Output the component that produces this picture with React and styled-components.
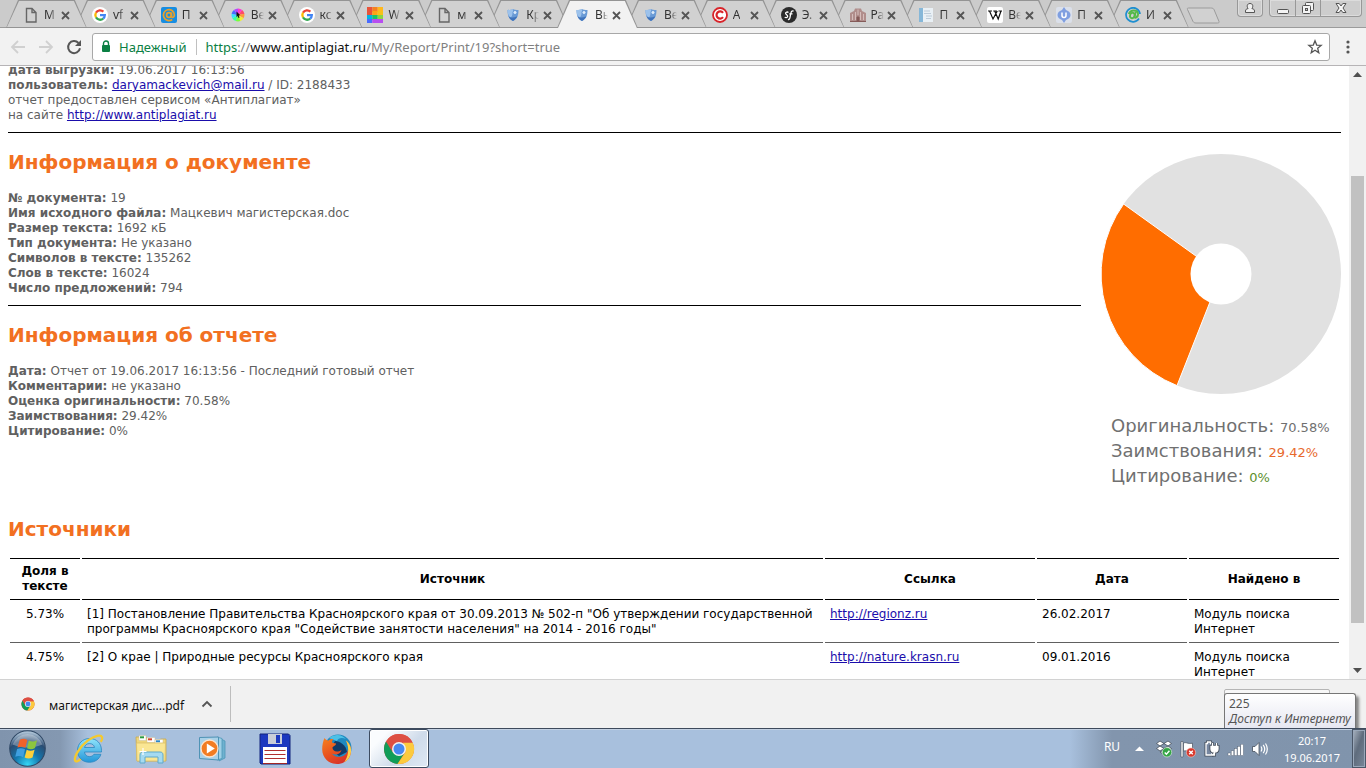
import React from "react";
import styled, { createGlobalStyle } from "styled-components";

const uiFont = `"Noto Sans", "Open Sans", sans-serif`;
const docFont = `Verdana, "DejaVu Sans", sans-serif`;

const GlobalStyle = createGlobalStyle`
  * { box-sizing: border-box; }
  body { margin: 0; background: #fff; }
  button { font: inherit; color: inherit; background: none; border: 0; padding: 0; margin: 0; }
`;

const Screen = styled.div`
  display: flex;
  flex-direction: column;
  height: 100vh;
  overflow: hidden;
  font-family: ${uiFont};
`;

/* ---------- tab strip ---------- */

const TabStrip = styled.header`
  display: flex;
  height: 28px;
  flex: none;
  padding-left: 6px;
  background: #cbcbcb;
  border-bottom: 1px solid #9b9b9b;
`;

const TabList = styled.nav`
  display: flex;
  flex: 1;
  min-width: 0;
`;

const Tab = styled.div`
  position: relative;
  z-index: ${(p) => (p.$active ? 40 : p.$layer)};
  flex: 1 1 0;
  min-width: 0;
  max-width: 240px;
  height: 28px;
  margin-right: -12px;
  padding: 2px 17px 0 17px;
  display: flex;
  align-items: center;
  background: #949494;
  clip-path: polygon(0 100%, 12px 0, calc(100% - 12px) 0, 100% 100%);
  &:last-child { margin-right: 0; }
  &::before {
    content: "";
    position: absolute;
    z-index: -1;
    inset: 1px 1px ${(p) => (p.$active ? "0" : "1px")} 1px;
    background: ${(p) => (p.$active ? "#f2f2f2" : "#d1d1d1")};
    clip-path: polygon(0 100%, 12px 0, calc(100% - 12px) 0, 100% 100%);
  }
`;

const TabTitle = styled.button`
  display: flex;
  align-items: center;
  gap: 5px;
  flex: 1;
  min-width: 0;
  font-size: 12px;
  line-height: 16px;
  color: #333;
  svg { flex: none; }
  span {
    white-space: nowrap;
    text-align: left;
    mask-image: linear-gradient(90deg, #000 6px, transparent 13px);
  }
`;

const IconButton = styled.button`
  display: flex;
  align-items: center;
  justify-content: center;
  flex: none;
  svg { display: block; }
`;

const NewTab = styled.button`
  flex: none;
  width: 34px;
  height: 17px;
  margin: 7px 17px 0 -3px;
  svg { display: block; }
`;

const WindowButtons = styled.div`
  display: flex;
  flex: none;
  height: 17px;
  margin-right: ${(p) => (p.$last ? "4px" : "6px")};
  border: 1px solid #989898;
  border-top: 0;
  border-radius: 0 0 4px 4px;
  background: #cdcdcd;
  box-shadow: inset 0 0 0 1px #dcdcdc;
`;

const WindowButton = styled(IconButton)`
  width: ${(p) => p.$width}px;
  & + & { border-left: 1px solid #989898; }
`;

/* ---------- toolbar ---------- */

const Toolbar = styled.div`
  display: flex;
  align-items: center;
  flex: none;
  height: 38px;
  padding-left: 4px;
  background: #f2f2f2;
  border-bottom: 1px solid #b6b4b6;
`;

const NavButton = styled(IconButton)`
  width: 28px;
  height: 28px;
  color: ${(p) => (p.disabled ? "#d0d0d0" : "#555")};
`;

const MenuButton = styled(IconButton)`
  width: 36px;
  height: 28px;
  color: #555;
`;

const AddressBar = styled.div`
  display: flex;
  align-items: center;
  flex: 1;
  min-width: 0;
  height: 28px;
  margin-left: 4px;
  padding: 0 6px 0 8px;
  border: 1px solid #a8a8a8;
  border-radius: 3px;
  background: #fff;
  font-size: 13px;
  line-height: 20px;
`;

const Secure = styled.button`
  display: flex;
  align-items: center;
  gap: 8px;
  margin-right: 8px;
  padding-right: 10px;
  border-right: 1px solid #c0c0c0;
  color: #0b8043;
  height: 16px;
`;

const Url = styled.div`
  flex: 1;
  color: #808080;
  white-space: nowrap;
  b { font-weight: 400; color: #0b8043; }
  strong { font-weight: 400; color: #111; }
`;

/* ---------- page viewport ---------- */

const Viewport = styled.div`
  display: flex;
  flex: 1;
  min-height: 0;
  overflow: hidden;
`;

const Document = styled.main`
  flex: 1;
  min-width: 0;
  margin-top: -3px;
  padding: 0 8px;
  font-family: ${docFont};
  font-size: 12px;
  line-height: 15px;
  color: #606060;
`;

const Meta = styled.p`
  margin: 0;
`;

const DocLink = styled.a`
  color: #1a0dab;
  text-decoration: underline;
`;

const Rule = styled.hr`
  height: 1px;
  margin: 9px 0 0;
  border: 0;
  background: #000;
`;

const Summary = styled.section`
  display: flex;
  gap: 20px;
  padding-bottom: 12px;
`;

const SummaryText = styled.div`
  flex: 1;
  min-width: 0;
`;

const Heading = styled.h2`
  margin: 17px 0 16px;
  font-size: 20px;
  line-height: 25px;
  font-weight: 700;
  color: #f27021;
`;

const ChartPanel = styled.aside`
  flex: none;
  width: 240px;
  padding-top: 21px;
  svg { display: block; }
`;

const Legend = styled.ul`
  list-style: none;
  margin: 19px 0 0;
  padding: 0 0 0 10px;
  font-size: 18px;
  line-height: 25px;
  color: #707070;
  white-space: nowrap;
`;

const LegendValue = styled.span`
  font-size: 13px;
  line-height: 15px;
  color: ${(p) => p.$color};
`;

const SourceTable = styled.table`
  width: 100%;
  table-layout: fixed;
  border-collapse: separate;
  border-spacing: 2px 2px;
  margin-top: -2px;
  font-size: 12px;
  line-height: 15px;
  color: #000;
`;

const Th = styled.th`
  width: ${(p) => p.$width || "auto"};
  padding: 5px;
  border-top: 1px solid #000;
  border-bottom: 1px solid #000;
`;

const Td = styled.td`
  padding: 5px;
  border-bottom: 1px solid #606060;
  vertical-align: top;
  text-align: ${(p) => (p.$center ? "center" : "left")};
`;

const Scrollbar = styled.div`
  display: flex;
  flex-direction: column;
  align-items: center;
  flex: none;
  width: 17px;
  background: #f1f1f1;
`;

const ScrollButton = styled(IconButton)`
  width: 17px;
  height: 17px;
`;

const ScrollTrack = styled.div`
  display: flex;
  flex-direction: column;
  flex: 1;
  width: 13px;
  &::before { content: ""; flex: 93; }
  &::after { content: ""; flex: 39; }
`;

const ScrollThumb = styled.div`
  flex: 447;
  background: #c1c1c1;
`;

/* ---------- downloads ---------- */

const DownloadBar = styled.footer`
  position: relative;
  display: flex;
  align-items: flex-start;
  justify-content: space-between;
  flex: none;
  height: 49px;
  background: #f1f1f1;
  border-top: 1px solid #d2d2d2;
  font-size: 12px;
  line-height: 18px;
`;

const DownloadItem = styled.div`
  display: flex;
  align-items: center;
  width: 231px;
  height: 36px;
  margin-top: 6px;
  padding: 0 17px 0 21px;
  border-right: 1px solid #bdbdbd;
`;

const FileName = styled.button`
  display: flex;
  align-items: center;
  gap: 14px;
  flex: 1;
  color: #111;
  white-space: nowrap;
  svg { flex: none; }
  span { padding-top: 4px; }
`;

const ShowAll = styled.button`
  width: 106px;
  height: 28px;
  margin: 9px 36px 0 0;
  border: 1px solid #b5b5b5;
  border-radius: 2px;
  background: #f7f7f7;
  color: #444;
`;

const Tooltip = styled.div`
  position: absolute;
  right: 10px;
  bottom: 0;
  height: 35px;
  width: 132px;
  padding: 2px 4px 0;
  border: 1px solid #767676;
  border-bottom: 0;
  border-radius: 3px 3px 0 0;
  background: linear-gradient(#fff, #e6e7f1);
  box-shadow: 3px 3px 3px rgba(0, 0, 0, 0.45);
  font-size: 12px;
  line-height: 15px;
  color: #555;
  white-space: nowrap;
  em { display: block; }
`;

/* ---------- taskbar ---------- */

const Taskbar = styled.footer`
  position: relative;
  display: flex;
  align-items: center;
  flex: none;
  height: 40px;
  border-top: 1px solid #3e4a5c;
  box-shadow: inset 0 1px 0 #c3d1e3;
  background: linear-gradient(90deg, #8094ad 0, #8498b1 60px, transparent 88px),
    linear-gradient(270deg, #8094ac 0, #8295ad 254px, transparent 296px), #a8c0dd;
`;

const StartButton = styled(IconButton)`
  width: 54px;
  margin-right: 5px;
`;

const AppButton = styled(IconButton)`
  width: 60px;
  height: 39px;
  margin-right: 2px;
  ${(p) =>
    p.$active &&
    `border: 1px solid #3c4b60; border-radius: 3px; box-shadow: inset 0 0 0 1px #fff;
     background: linear-gradient(135deg, #fafcfe 20%, #cfdbea 60%, #dfe9f4);`}
`;

const Tray = styled.div`
  display: flex;
  align-items: center;
  margin-left: auto;
  height: 100%;
  color: #fff;
`;

const Language = styled.button`
  width: 28px;
  padding-bottom: 4px;
  font-size: 12px;
`;

const TrayButton = styled(IconButton)`
  width: ${(p) => p.$width || 24}px;
  height: 24px;
`;

const Clock = styled.time`
  width: 80px;
  font-size: 11px;
  line-height: 17px;
  text-align: center;
`;

const ShowDesktop = styled.button`
  width: 14px;
  height: 100%;
  border: 1px solid #4b5768;
  box-shadow: inset 0 0 0 1px #9aa8ba;
  background: linear-gradient(110deg, #a9b3c0, #5f6c7d 45%, #798799);
`;

/* ---------- favicons ---------- */

const Svg = ({ size = 16, box, children, ...rest }) => (
  <svg width={size} height={size} viewBox={`0 0 ${box || size} ${box || size}`} aria-hidden="true" {...rest}>
    {children}
  </svg>
);

const PageIcon = () => (
  <Svg>
    <path d="M3.5 1.5h5.5l4 4v9.5h-9.5z M9 1.5v4h4" fill="none" stroke="#666" strokeWidth="1.4" />
  </Svg>
);

const GoogleIcon = () => (
  <Svg>
    <circle cx="8" cy="8" r="8" fill="#fff" />
    <g fill="none" strokeWidth="2.3">
      <path d="M4 5.6A4.8 4.8 0 0 1 11.4 4.6" stroke="#ea4335" />
      <path d="M4 5.6A4.8 4.8 0 0 0 4 10.4" stroke="#fbbc05" />
      <path d="M4 10.4A4.8 4.8 0 0 0 11.2 11.6" stroke="#34a853" />
      <path d="M8 8.2h4.8A4.8 4.8 0 0 1 11.2 11.6" stroke="#4285f4" />
    </g>
  </Svg>
);

const MailIcon = () => (
  <Svg>
    <rect width="16" height="16" rx="2" fill="#168de2" />
    <g fill="none" stroke="#e8a02c" strokeWidth="1.7">
      <circle cx="8" cy="8" r="2.4" />
      <path d="M10.4 5.5v3.6c0 2 3 1.600 3-1.100A5.500 5.500 0 1 0 11.200 12.500" />
    </g>
  </Svg>
);

const WheelIcon = () => (
  <Svg>
    {["#ff4a6a", "#ff9a3a", "#f0f03a", "#7dff3a", "#3affa2", "#3ae0ff", "#4a6aff", "#b04aff", "#ff3ad0"].map((c, i) => {
      const a = ((i * 40 - 50) * Math.PI) / 180;
      const b = ((i * 40 - 9) * Math.PI) / 180;
      return (
        <path
          key={c}
          fill={c}
          d={`M8 8L${8 + 6.5 * Math.cos(a)} ${8 + 6.5 * Math.sin(a)}A6.5 6.5 0 0 1 ${8 + 6.5 * Math.cos(b)} ${8 + 6.5 * Math.sin(b)}Z`}
        />
      );
    })}
    <path d="M6.500 4.500l3.800 3.700-1.600.2.900 2-1.100.5-.9-2-1.100 1z" fill="#111" />
  </Svg>
);

const GridIcon = () => (
  <Svg>
    {[
      ["#e8533a", "#f58220", "#ffb81c"],
      ["#e8533a", "#fda515", "#f7c117"],
      ["#00b4e4", "#19c569", "#8dd63f"],
    ].map((row, y) => row.map((c, x) => <rect key={`${x}${y}`} x={x * 5.33} y={y * 4} width="5.4" height="5" fill={c} />))}
    <path d="M0 12h5.300v4H0z" fill="#4a6bff" />
    <path d="M5.300 12h10.700v4H5.300z" fill="#b84df0" />
  </Svg>
);

const ShieldIcon = () => (
  <Svg>
    <path d="M2.500 3C5 3 7 2.600 8 2c1 .6 3 1 5.500 1 0 6-1.500 9-5.500 11C4 12 2.500 9 2.500 3z" fill="#6a9bd6" />
    <path d="M2.500 3C5 3 7 2.600 8 2c.3.200 0 6-2 8.500C3.500 10 2.500 6 2.500 3z" fill="#9cc2ec" />
    <circle cx="10" cy="5.500" r="2" fill="#dcebfa" stroke="#5b8fd0" strokeWidth=".8" />
    <path d="M3.500 9c2 2 5 2 8.800.3-.8 2-2.200 3.400-4.300 4.700C5.500 13 4.200 11.300 3.500 9z" fill="#3f73bb" />
  </Svg>
);

const CopyrightIcon = () => (
  <Svg>
    <circle cx="8" cy="8" r="7" fill="#fff" stroke="#d8242a" strokeWidth="1.800" />
    <path d="M11 5.800A3.600 3.600 0 1 0 11 10.200" fill="none" stroke="#d8242a" strokeWidth="2.200" />
  </Svg>
);

const SymfonyIcon = () => (
  <Svg>
    <circle cx="8" cy="8" r="8" fill="#2b2b2b" />
    <path
      d="M7.300 5.600C6.800 4.600 4.400 5 4.600 6.500c.2 1.300 2.400 1.500 2 3.100-.3 1.300-2.200 1.300-2.800.4M12.600 4.300c-1-.9-2.400-.2-2.700 1.600L9 10.500c-.3 1.700-1.200 2.300-2 1.900M8.300 6.900h3.200"
      fill="none"
      stroke="#fff"
      strokeWidth="1.300"
    />
  </Svg>
);

const LibraryIcon = () => (
  <Svg>
    <path d="M0 6l4-2 1-2.500h6L12 4l4 2v9H0z" fill="#b08d8b" />
    <path d="M2.500 13V7M5.500 13V5M8 8V2.500M10.500 13V5M13.500 13V7" stroke="#d9c3c1" strokeWidth=".9" />
    <path d="M0 14.500h16M7 10h2v4H7z" stroke="#855b59" strokeWidth="1" fill="#855b59" />
  </Svg>
);

const DocIcon = () => (
  <Svg>
    <rect x="1" y="1" width="14" height="14" fill="#e9f0f5" />
    <rect x="1" y="1" width="4" height="14" fill="#86b7d8" />
    <path d="M6 4h6M6 6.500h7M8 9h6M8 11.500h5" stroke="#bccbd8" />
  </Svg>
);

const WikiIcon = () => (
  <Svg>
    <rect width="16" height="16" rx="2" fill="#fff" />
    <path d="M1 4h4M6.300 4h3.600M11.500 4H15M2.600 4.200L6 12l4.300-8M7.700 4l3.500 8 2.800-8" fill="none" stroke="#111" strokeWidth="1.200" />
  </Svg>
);

const UnivIcon = () => (
  <Svg>
    <rect width="16" height="16" rx="2" fill="#dbe0ea" />
    <path d="M8 0l2 3c3 1 4.500 2.700 4.500 5s-1.500 4-4.500 5l-2 3-2-3C3 12 1.500 10.300 1.500 8S3 4 6 3z" fill="#7f9fe0" />
    <path d="M6 5.500V8.600a2 2 0 0 0 4 0V5.500" fill="none" stroke="#fff" strokeWidth="1.500" />
  </Svg>
);

const AtIcon = () => (
  <Svg>
    <path d="M14 11.500A7 7 0 1 1 15 7" fill="none" stroke="#1f8fd0" strokeWidth="1.700" />
    <g fill="none" stroke="#54b948" strokeWidth="1.800">
      <ellipse cx="7.300" cy="8.500" rx="2.200" ry="2.700" transform="rotate(20 7.300 8.500)" />
      <path d="M10.700 5l-1.100 5c0 1.800 3.500.5 3.500-2.600C13.100 2.500 6 2 3.700 7" />
    </g>
  </Svg>
);

const ChromeIcon = ({ size = 16 }) => (
  <Svg size={size} box={32}>
    <circle cx="16" cy="16" r="15" fill="#dd4f43" />
    <path d="M3 8.500A15 15 0 0 0 14.500 31L21.500 20 16 16 9.500 19z" fill="#109d58" />
    <path d="M29.600 9.500A15 15 0 0 1 14.500 31l8-12L20 9.500z" fill="#fcca3e" />
    <path d="M3 8.500A15 15 0 0 1 29.600 9.500H16z" fill="#dd4f43" />
    <circle cx="16" cy="16" r="7" fill="#f1f1f1" />
    <circle cx="16" cy="16" r="5.500" fill="#4688f1" />
  </Svg>
);

const CloseIcon = () => (
  <Svg size={9}>
    <path d="M1 1l7 7M8 1l-7 7" stroke="#555" strokeWidth="1.800" />
  </Svg>
);

/* ---------- taskbar icons ---------- */

const StartOrb = () => (
  <Svg size={37} box={36}>
    <defs>
      <radialGradient id="orb" cx=".5" cy=".95" r=".9">
        <stop offset="0" stopColor="#35d6f5" />
        <stop offset=".4" stopColor="#1377ae" />
        <stop offset=".75" stopColor="#2b4c72" />
        <stop offset="1" stopColor="#a9bfd3" />
      </radialGradient>
    </defs>
    <circle cx="18" cy="18" r="17.300" fill="url(#orb)" stroke="#2f4865" />
    <path d="M3.500 14A15.500 15.500 0 0 1 32.500 14C24 18 12 18 3.500 14z" fill="#fff" opacity=".3" />
    <path d="M10.500 9.500c3-1.700 5-1.200 7.300.2L16 17.300c-2.500-1.400-5-1.500-7.800-.2z" fill="#f0622a" />
    <path d="M19.300 10.300c2.700 1.300 5 1.300 8-.3l-2 7.500c-2.500 1.500-5 1.400-7.700.3z" fill="#8cc63e" />
    <path d="M7.900 18.500c2.800-1.300 5.200-1 7.700.3l-1.900 7.600c-2.500-1.400-5-1.400-7.600-.3z" fill="#3f9fe0" />
    <path d="M17.200 19.300c2.700 1.300 5 1.200 7.700-.2l-2 7.600c-2.500 1.400-5 1.400-7.700 0z" fill="#fcd03b" />
  </Svg>
);

const IeIcon = () => (
  <Svg size={32}>
    <defs>
      <linearGradient id="ie" x1="0" y1="0" x2="0" y2="1">
        <stop offset="0" stopColor="#8fe4fb" />
        <stop offset="1" stopColor="#2496d8" />
      </linearGradient>
    </defs>
    <path
      d="M28.500 19H11.500c.3 3 2.200 4.600 5 4.600 2.100 0 3.600-.8 4.400-2.300h7c-1.500 5-6 8-11.500 8C9.500 29.300 4.500 24.500 4.500 17.500S9.800 5.500 16.500 5.500c7.500 0 12 5.200 12 12zM21.500 14.500c-.3-2.300-2.200-3.900-4.900-3.900s-4.600 1.500-5.100 3.900z"
      fill="url(#ie)"
      stroke="#2b86c0"
      strokeWidth=".8"
    />
    <path d="M7.500 26c-2.500 2.600-4.800 3-5.400 1.600C.8 24.500 6 14 15 7.400 22 2.200 28 1.500 29 4.200c.5 1.300-.2 3-1.200 4.700" fill="none" stroke="#f4c92f" strokeWidth="2.300" />
  </Svg>
);

const FolderIcon = () => (
  <Svg size={32}>
    <path d="M1 4h10l2 3h11l2-1h5v22H2z" fill="#efd67a" stroke="#c9a94e" strokeWidth=".8" />
    <path d="M4 2.500h7v5H4zM12 4.500h8v5h-8zM20 6.500h8v5h-8z" fill="#fff" stroke="#c9bf9b" strokeWidth=".5" />
    <path d="M5 3.300h4v2H5z" fill="#2d9b3f" />
    <path d="M13 5.300h4v2h-4z" fill="#d4442d" />
    <path d="M21 7.300h4v2h-4z" fill="#2c87c9" />
    <path d="M1.500 10h29L30 28H2z" fill="#fae693" stroke="#dcc06a" strokeWidth=".8" />
    <path d="M5 30V22c0-2 1-3 3-3h17c2 0 3 1 3 3v8h-5v-6H10v6z" fill="#a5daf0" stroke="#5fa9cc" />
    <path d="M8 15v7M4.500 18.500h7" stroke="#fff" strokeWidth="1.200" />
  </Svg>
);

const PlayerIcon = () => (
  <Svg size={32}>
    <path d="M24 6l4 2v17l-6 3z" fill="#6fb1cf" stroke="#4c97b7" strokeWidth=".8" />
    <path d="M20 4l5 1.500v20L20 27z" fill="#9fd0e6" stroke="#4c97b7" strokeWidth=".8" />
    <path d="M2.500 4.500l19-.5v23l-19-1.500z" fill="#a9d1e8" stroke="#4f93b5" />
    <circle cx="12.500" cy="15.500" r="8.500" fill="#f27c22" stroke="#fbe3cf" strokeWidth="1.300" />
    <path d="M9.800 10.500v10l8-5z" fill="#fff" />
  </Svg>
);

const FloppyIcon = () => (
  <Svg size={32}>
    <path d="M1 1h28.500l1.500 1.500V31H2l-1-1z" fill="#1c39bf" stroke="#12257c" />
    <rect x="9" y="1" width="14" height="10" fill="#c9ced8" />
    <rect x="17" y="2" width="4" height="8" fill="#1c39bf" />
    <rect x="4" y="14" width="24" height="16" fill="#fff" />
    <path d="M5.500 17.500h21M5.500 21.500h21M5.500 25.500h21" stroke="#b03030" strokeWidth="1.200" />
    <path d="M4 30.500h24" stroke="#a02525" />
  </Svg>
);

const FirefoxIcon = () => (
  <Svg size={32}>
    <defs>
      <linearGradient id="fox" x1="0" y1="0" x2=".6" y2="1">
        <stop offset="0" stopColor="#f58220" />
        <stop offset=".6" stopColor="#e8501f" />
        <stop offset="1" stopColor="#d8322a" />
      </linearGradient>
    </defs>
    <circle cx="17" cy="15" r="13.500" fill="#1f8ac0" />
    <path d="M8 5a12 12 0 0 1 17 1c-4-2-8-1-9 2z" fill="#4dc1e6" />
    <path d="M14 8c5 0 11 4 12 11l-8 4-9-7z" fill="#123b67" />
    <path d="M3.500 5c1 1.500 2 2.300 4 2.500 2-1.600 3.500-1.500 5-1.200-1.300 1-1.600 2.200-1.400 3.300 1.300.7 3.300.6 4 1.200-.4 2-2.500 2.400-3.600 3.500-.3 4 4.500 5.700 9 2.700-1 4.500-6 5.500-9.500 3.800C15 26 25 24.500 27 17c.5-3-.2-6-2-9.500 5 3.500 6.300 10 4 15.500C26.500 28.500 21 31 16 31 8 31 1.200 25 1.200 16.500 1.200 12 2 8 3.500 5z" fill="url(#fox)" />
    <path d="M25 7.500c5 3.500 6.300 10 4 15.500-1.300 2.800-3.300 4.900-5.700 6.200C27 24 29 16 25 7.500z" fill="#fcd24a" />
  </Svg>
);

const DropboxIcon = () => (
  <Svg size={18}>
    <path d="M5 1L1.500 3.500 5 6l4-2.500 4 2.500 3.500-2.500L13 1 9 3.500zM5 6L1.500 8.500 5 11l4-2.500 4 2.500 3.500-2.500L13 6 9 8.500zM5 12l4 2.500 3-2L9 10z" fill="#fff" stroke="#454f5c" strokeWidth=".8" />
    <circle cx="12" cy="12.300" r="4.700" fill="#34a545" stroke="#e0f0e0" strokeWidth=".6" />
    <path d="M9.700 12.500l1.700 1.700 3-3.500" fill="none" stroke="#fff" strokeWidth="1.400" />
  </Svg>
);

const FlagIcon = () => (
  <Svg size={18}>
    <path d="M2 1.500h2V17H2z" fill="#fff" stroke="#454f5c" strokeWidth=".6" />
    <path d="M4.500 3c3-1.200 4 1.200 9 .2v8c-5 1-6-1.200-9 0z" fill="#fff" stroke="#454f5c" strokeWidth=".7" />
    <circle cx="12" cy="12.500" r="4.600" fill="#d9372b" stroke="#f5c9c4" strokeWidth=".6" />
    <path d="M10.200 10.700l3.600 3.600M13.800 10.700l-3.600 3.600" stroke="#fff" strokeWidth="1.400" />
  </Svg>
);

const PowerIcon = () => (
  <Svg size={18}>
    <path d="M3 3.500h1.500V2h3v1.500H9V15H3z" fill="none" stroke="#434d5a" strokeWidth="3" />
    <path d="M3 3.500h1.500V2h3v1.500H9V15H3z" fill="#7787a0" stroke="#fff" strokeWidth="1.300" />
    <path d="M9.500 3v3M13.500 3v3M8 6.500h7v2.500c0 2-1.500 3-3.500 3S8 11 8 9zM11.500 12v3H9" fill="#fff" stroke="#434d5a" strokeWidth="3" />
    <path d="M9.500 3v3M13.500 3v3M8 6.500h7v2.500c0 2-1.500 3-3.500 3S8 11 8 9zM11.500 12v3H9" fill="#fff" stroke="#fff" strokeWidth="1.300" />
  </Svg>
);

const SignalIcon = () => (
  <Svg size={18}>
    {[0, 1, 2, 3, 4].map((i) => (
      <rect key={i} x={1 + i * 3.2} y={13 - i * 2.2} width="2.600" height={2.500 + i * 2.2} fill="#fff" stroke="#4f5b6b" strokeWidth=".4" />
    ))}
  </Svg>
);

const VolumeIcon = () => (
  <Svg size={18}>
    <path d="M1.500 6.500h2.500L8 2.500v13L4 11.500H1.500z" fill="#fff" stroke="#454f5c" strokeWidth=".8" />
    <path d="M10 6.500c1 1.500 1 3.500 0 5M12.200 4.800c1.800 2.500 1.800 6 0 8.400M14.500 3.500c2.300 3.500 2.300 7.500 0 11" fill="none" stroke="#fff" strokeWidth="1.200" />
  </Svg>
);

/* ---------- data ---------- */

const tabs = [
  ["М", PageIcon],
  ["vf", GoogleIcon],
  ["П", MailIcon],
  ["Ве", WheelIcon],
  ["кс", GoogleIcon],
  ["W", GridIcon],
  ["м", PageIcon],
  ["Кр", ShieldIcon],
  ["Вы", ShieldIcon],
  ["Ве", ShieldIcon],
  ["А", CopyrightIcon],
  ["Э.", SymfonyIcon],
  ["Ра", LibraryIcon],
  ["П", DocIcon],
  ["Ве", WikiIcon],
  ["П", UnivIcon],
  ["И", AtIcon],
];

const documentInfo = [
  ["№ документа", "19"],
  ["Имя исходного файла", "Мацкевич магистерская.doc"],
  ["Размер текста", "1692 кБ"],
  ["Тип документа", "Не указано"],
  ["Символов в тексте", "135262"],
  ["Слов в тексте", "16024"],
  ["Число предложений", "794"],
];

const reportInfo = [
  ["Дата", "Отчет от 19.06.2017 16:13:56 - Последний готовый отчет"],
  ["Комментарии", "не указано"],
  ["Оценка оригинальности", "70.58%"],
  ["Заимствования", "29.42%"],
  ["Цитирование", "0%"],
];

const legend = [
  ["Оригинальность", "70.58%", "#707070"],
  ["Заимствования", "29.42%", "#e8692c"],
  ["Цитирование", "0%", "#5d8f2e"],
];

const sources = [
  [
    "5.73%",
    '[1] Постановление Правительства Красноярского края от 30.09.2013 № 502-п "Об утверждении государственной программы Красноярского края "Содействие занятости населения" на 2014 - 2016 годы"',
    "http://regionz.ru",
    "26.02.2017",
  ],
  ["4.75%", "[2] О крае | Природные ресурсы Красноярского края", "http://nature.krasn.ru", "09.01.2016"],
];

const apps = [
  ["Internet Explorer", IeIcon],
  ["Проводник", FolderIcon],
  ["Проигрыватель", PlayerIcon],
  ["Total Commander", FloppyIcon],
  ["Firefox", FirefoxIcon],
];

const InfoList = ({ items }) =>
  items.map(([label, value]) => (
    <Meta key={label}>
      <b>{label}:</b> {value}
    </Meta>
  ));

const Donut = () => (
  <svg width="240" height="240" viewBox="0 0 240 240" role="img" aria-label="Оригинальность 70.58%, заимствования 29.42%">
    <circle cx="120" cy="120" r="120" fill="#e1e1e1" />
    <path d="M120 120L22.600 50A120 120 0 0 0 76 231.600Z" fill="#ff6d00" stroke="#fff" strokeWidth="1" />
    <circle cx="120" cy="120" r="30.500" fill="#fff" />
  </svg>
);

export default function App() {
  return (
    <Screen>
      <GlobalStyle />
      <TabStrip>
        <TabList aria-label="Вкладки">
          {tabs.map(([title, Icon], i) => (
            <Tab key={i} $active={i === 8} $layer={tabs.length - i}>
              <TabTitle>
                <Icon />
                <span>{title}</span>
              </TabTitle>
              <IconButton aria-label="Закрыть вкладку">
                <CloseIcon />
              </IconButton>
            </Tab>
          ))}
        </TabList>
        <NewTab aria-label="Новая вкладка">
          <svg width="34" height="17" viewBox="0 0 34 17" aria-hidden="true">
            <path d="M2.500 1h22c2 0 3 .5 3.500 1.500l5 12c.3 1-.2 1.500-1.500 1.500H10c-1.500 0-2.300-.5-3-1.500l-5.500-12C1 1.500 1.500 1 2.500 1z" fill="#d1d1d1" stroke="#9b9b9b" />
          </svg>
        </NewTab>
        <WindowButtons>
          <WindowButton $width={24} aria-label="Пользователь">
            <Svg size={14}>
              <path d="M2.500 11.500V10c0-1.500 1-2.200 2.600-2.400C3.500 5.500 4 2.500 7 2.500s3.500 3 1.900 5.100c1.600.2 2.600.9 2.600 2.400v1.500z" fill="#eee" stroke="#555" />
            </Svg>
          </WindowButton>
        </WindowButtons>
        <WindowButtons $last>
          <WindowButton $width={25} aria-label="Свернуть">
            <Svg size={14}>
              <rect x="1.500" y="8.500" width="11" height="4" rx="1" fill="#f4f4f4" stroke="#555" />
            </Svg>
          </WindowButton>
          <WindowButton $width={25} aria-label="Восстановить">
            <Svg size={14}>
              <rect x="4.500" y="1.500" width="8" height="8" rx="1" fill="#f4f4f4" stroke="#555" />
              <rect x="1.500" y="4.500" width="8" height="8" rx="1" fill="#f4f4f4" stroke="#555" />
              <rect x="4.500" y="7.500" width="2" height="2" fill="#cdcdcd" stroke="#555" />
            </Svg>
          </WindowButton>
          <WindowButton $width={41} aria-label="Закрыть">
            <Svg size={14}>
              <path d="M2 2.500h3.200L7 5l1.800-2.500H12L9 7l3 4.500H8.800L7 9l-1.800 2.500H2L5 7z" fill="#f4f4f4" stroke="#555" />
            </Svg>
          </WindowButton>
        </WindowButtons>
      </TabStrip>

      <Toolbar>
        <NavButton disabled aria-label="Назад">
          <Svg>
            <path d="M15 8H2.500M8 2L2 8l6 6" fill="none" stroke="currentColor" strokeWidth="1.800" />
          </Svg>
        </NavButton>
        <NavButton disabled aria-label="Вперёд">
          <Svg>
            <path d="M1 8h12.500M8 2l6 6-6 6" fill="none" stroke="currentColor" strokeWidth="1.800" />
          </Svg>
        </NavButton>
        <NavButton aria-label="Обновить">
          <Svg>
            <path d="M12.500 4A6 6 0 1 0 14 9.300" fill="none" stroke="currentColor" strokeWidth="2" />
            <path d="M15 1v6H9z" fill="currentColor" />
          </Svg>
        </NavButton>
        <AddressBar>
          <Secure>
            <svg width="10" height="13" viewBox="0 0 10 13" aria-hidden="true">
              <path d="M2.500 6V3.500a2.500 2.500 0 0 1 5 0V6" fill="none" stroke="#0b8043" strokeWidth="1.400" />
              <rect x="1" y="5" width="8" height="7" rx="1" fill="#0b8043" />
            </svg>
            Надежный
          </Secure>
          <Url>
            <b>https</b>://<strong>www.antiplagiat.ru</strong>/My/Report/Print/19?short=true
          </Url>
          <IconButton aria-label="Добавить в закладки">
            <Svg>
              <path d="M8 1.800l1.700 4.300 4.500.3-3.500 2.900 1.100 4.500L8 11.300l-3.800 2.500 1.100-4.500-3.500-2.900 4.500-.3z" fill="none" stroke="#555" strokeWidth="1.300" />
            </Svg>
          </IconButton>
        </AddressBar>
        <MenuButton aria-label="Меню">
          <Svg>
            <circle cx="8" cy="3" r="1.600" fill="currentColor" />
            <circle cx="8" cy="8" r="1.600" fill="currentColor" />
            <circle cx="8" cy="13" r="1.600" fill="currentColor" />
          </Svg>
        </MenuButton>
      </Toolbar>

      <Viewport>
        <Document>
          <Meta>
            <b>дата выгрузки:</b> 19.06.2017 16:13:56
          </Meta>
          <Meta>
            <b>пользователь:</b> <DocLink href="mailto:daryamackevich@mail.ru">daryamackevich@mail.ru</DocLink> / ID: 2188433
          </Meta>
          <Meta>отчет предоставлен сервисом «Антиплагиат»</Meta>
          <Meta>
            на сайте <DocLink href="http://www.antiplagiat.ru">http://www.antiplagiat.ru</DocLink>
          </Meta>
          <Rule />
          <Summary>
            <SummaryText>
              <Heading>Информация о документе</Heading>
              <InfoList items={documentInfo} />
              <Rule />
              <Heading>Информация об отчете</Heading>
              <InfoList items={reportInfo} />
            </SummaryText>
            <ChartPanel>
              <Donut />
              <Legend>
                {legend.map(([label, value, color]) => (
                  <li key={label}>
                    {label}: <LegendValue $color={color}>{value}</LegendValue>
                  </li>
                ))}
              </Legend>
            </ChartPanel>
          </Summary>
          <Heading>Источники</Heading>
          <SourceTable>
            <thead>
              <tr>
                <Th $width="70px">Доля в тексте</Th>
                <Th>Источник</Th>
                <Th $width="210px">Ссылка</Th>
                <Th $width="150px">Дата</Th>
                <Th $width="150px">Найдено в</Th>
              </tr>
            </thead>
            <tbody>
              {sources.map(([share, name, link, date]) => (
                <tr key={link}>
                  <Td $center>{share}</Td>
                  <Td>{name}</Td>
                  <Td>
                    <DocLink href={link}>{link}</DocLink>
                  </Td>
                  <Td>{date}</Td>
                  <Td>Модуль поиска Интернет</Td>
                </tr>
              ))}
            </tbody>
          </SourceTable>
        </Document>
        <Scrollbar>
          <ScrollButton aria-label="Вверх">
            <Svg size={9}>
              <path d="M0 7l4.500-5L9 7z" fill="#505050" />
            </Svg>
          </ScrollButton>
          <ScrollTrack>
            <ScrollThumb />
          </ScrollTrack>
          <ScrollButton aria-label="Вниз">
            <Svg size={9}>
              <path d="M0 2l4.500 5L9 2z" fill="#505050" />
            </Svg>
          </ScrollButton>
        </Scrollbar>
      </Viewport>

      <DownloadBar>
        <DownloadItem>
          <FileName>
            <ChromeIcon size={14} />
            <span>магистерская дис....pdf</span>
          </FileName>
          <IconButton aria-label="Действия с файлом">
            <Svg size={12}>
              <path d="M1.500 8.500L6 4l4.500 4.500" fill="none" stroke="#555" strokeWidth="1.800" />
            </Svg>
          </IconButton>
        </DownloadItem>
        <ShowAll aria-label="Показать все" />
        <Tooltip role="tooltip">
          225
          <em>Доступ к Интернету</em>
        </Tooltip>
      </DownloadBar>

      <Taskbar>
        <StartButton aria-label="Пуск">
          <StartOrb />
        </StartButton>
        {apps.map(([name, Icon]) => (
          <AppButton key={name} aria-label={name}>
            <Icon />
          </AppButton>
        ))}
        <AppButton $active aria-label="Google Chrome">
          <ChromeIcon size={32} />
        </AppButton>
        <Tray>
          <Language>RU</Language>
          <TrayButton $width={26} aria-label="Скрытые значки">
            <Svg size={9}>
              <path d="M0 7l4.500-4.500L9 7z" fill="#fff" />
            </Svg>
          </TrayButton>
          <TrayButton aria-label="Dropbox">
            <DropboxIcon />
          </TrayButton>
          <TrayButton aria-label="Центр поддержки">
            <FlagIcon />
          </TrayButton>
          <TrayButton aria-label="Питание">
            <PowerIcon />
          </TrayButton>
          <TrayButton aria-label="Сеть">
            <SignalIcon />
          </TrayButton>
          <TrayButton aria-label="Громкость">
            <VolumeIcon />
          </TrayButton>
          <Clock>
            20:17
            <br />
            19.06.2017
          </Clock>
          <ShowDesktop aria-label="Свернуть все окна" />
        </Tray>
      </Taskbar>
    </Screen>
  );
}
